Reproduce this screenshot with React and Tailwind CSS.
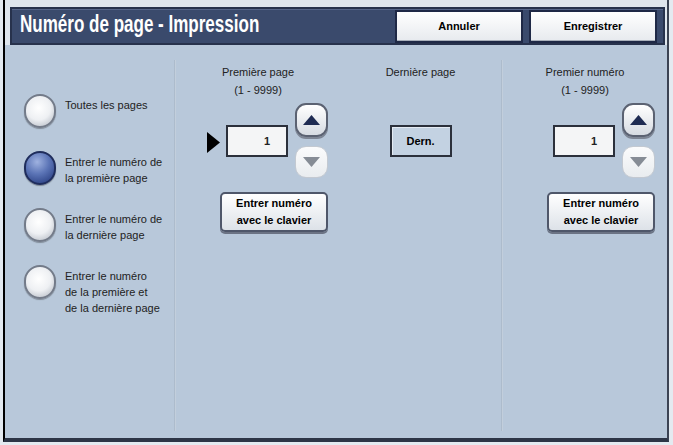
import React from "react";

const labelFont = { fontFamily: '"Liberation Sans", Arial, sans-serif' };

const options = [
  { id: "all", lines: ["Toutes les pages"] },
  { id: "first", lines: ["Entrer le numéro de", "la première page"] },
  { id: "last", lines: ["Entrer le numéro de", "la dernière page"] },
  { id: "both", lines: ["Entrer le numéro", "de la première et", "de la dernière page"] },
];

function Radio({ checked }) {
  return checked ? (
    <div className="w-[32px] h-[34px] shrink-0 rounded-full border-2 border-[#1f2d5c] bg-[radial-gradient(circle_at_40%_30%,#9fb2e0,#5b74b6_45%,#2f4588_85%)] shadow-[0_1px_1px_rgba(0,0,0,0.35)]" />
  ) : (
    <div className="w-[32px] h-[34px] shrink-0 rounded-full border-2 border-[#737b89] bg-[radial-gradient(circle_at_45%_40%,#ffffff,#eef0f3_50%,#b9bfc8_90%)] shadow-[0_1px_1px_rgba(0,0,0,0.3)]" />
  );
}

function Stepper() {
  return (
    <div className="flex flex-col gap-[9px] w-[33px]">
      <button className="h-[34px] rounded-[11px] border-2 border-[#5b6272] bg-gradient-to-b from-white to-[#d6dbe2] flex items-center justify-center shadow-[0_2px_0_#7d8594]">
        <svg width="17" height="10" viewBox="0 0 17 10">
          <path d="M8.5 0 L17 10 L0 10 Z" fill="#1e2b52" />
        </svg>
      </button>
      <button className="h-[32px] rounded-[11px] border border-[#c3c9d1] bg-gradient-to-b from-[#fbfbfc] to-[#e9ecef] flex items-center justify-center">
        <svg width="17" height="10" viewBox="0 0 17 10">
          <path d="M0 0 L17 0 L8.5 10 Z" fill="#868c95" />
        </svg>
      </button>
    </div>
  );
}

function KeypadButton() {
  return (
    <button className="mt-[14px] w-[108px] h-[40px] rounded-[5px] border-2 border-[#4f576a] bg-gradient-to-b from-white to-[#dde2e8] shadow-[0_2px_0_#6b7384] text-[11px] font-bold leading-[17px] text-black">
      Entrer numéro
      <br />
      avec le clavier
    </button>
  );
}

function NumberColumn({ title, withArrow, className }) {
  return (
    <div className={`pt-[18px] flex flex-col ${className}`}>
      <div className="text-center text-[11px] leading-[18px] text-[#222]">
        {title}
        <br />
        (1 - 9999)
      </div>
      <div className={`mt-[4px] flex items-start ${withArrow ? "pl-[31px]" : "pl-[50px]"}`}>
        {withArrow && (
          <svg width="13" height="21" viewBox="0 0 13 21" className="mt-[29px] mr-[6px]">
            <path d="M0 0 L13 10.5 L0 21 Z" fill="#000" />
          </svg>
        )}
        <div className="mt-[22px] w-[62px] h-[32px] border-2 border-[#2b303b] bg-[#f4f5f6] flex items-center justify-end pr-[16px] text-[11px] font-bold">
          1
        </div>
        <div className="ml-[7px]">
          <Stepper />
        </div>
      </div>
      <div className="pl-[44px]">
        <KeypadButton />
      </div>
    </div>
  );
}

function Divider() {
  return <div className="w-[2px] mt-[15px] mb-[7px] shrink-0 bg-gradient-to-r from-[#a2b2c4] to-[#cdd8e4]" />;
}

export default function App() {
  return (
    <div className="w-[673px] h-[445px] bg-[#e4eaf0] pl-[3px] overflow-hidden" style={labelFont}>
      <div className="w-[666px] h-[442px] flex flex-col border-l-2 border-l-black border-r-2 border-r-[#3b4353] border-b-4 border-b-[#2d3546] bg-[#dfe6ed]">
        <header className="mt-[7px] ml-[5px] mr-[2px] h-[38px] shrink-0 flex items-center bg-[#3a4a6c] border-2 border-[#27324c] shadow-[inset_0_1px_0_#56668a]">
          <div className="flex-1 min-w-0 pl-[8px]">
            <h1 className="inline-block origin-left scale-x-[0.74] whitespace-nowrap text-white font-bold text-[23px] leading-none">
              Numéro de page - Impression
            </h1>
          </div>
          <div className="flex gap-[6px] pr-[6px]">
            {["Annuler", "Enregistrer"].map((label) => (
              <button
                key={label}
                className="w-[128px] h-[33px] border-2 border-[#1f2946] bg-gradient-to-b from-white to-[#e7eaee] shadow-[inset_0_-1px_0_#a9b0bb] text-[11px] font-bold text-black"
              >
                {label}
              </button>
            ))}
          </div>
        </header>

        <main className="flex-1 flex bg-[#b8c8da] text-[11px] text-[#222]">
          <div className="w-[169px] shrink-0 pt-[49px] pl-[19px]">
            {options.map((opt, i) => (
              <div key={opt.id} className="h-[57px] flex items-start gap-[9px]">
                <Radio checked={i === 1} />
                <div className="pt-[3px] leading-[16px]">
                  {opt.lines.map((line) => (
                    <div key={line}>{line}</div>
                  ))}
                </div>
              </div>
            ))}
          </div>

          <Divider />

          <div className="w-[325px] shrink-0 flex">
            <NumberColumn title="Première page" withArrow className="w-[164px]" />
            <div className="w-[161px] pt-[18px] flex flex-col items-center">
              <div className="text-center leading-[18px]">Dernière page</div>
              <div className="mt-[44px] w-[62px] h-[32px] border-2 border-[#2b303b] bg-[#c3d2e2] shadow-[inset_1px_1px_0_#e4ebf3] flex items-center justify-center text-[11px] font-bold text-black">
                Dern.
              </div>
            </div>
          </div>

          <Divider />

          <NumberColumn title="Premier numéro" className="w-[164px]" />
        </main>
      </div>
    </div>
  );
}
